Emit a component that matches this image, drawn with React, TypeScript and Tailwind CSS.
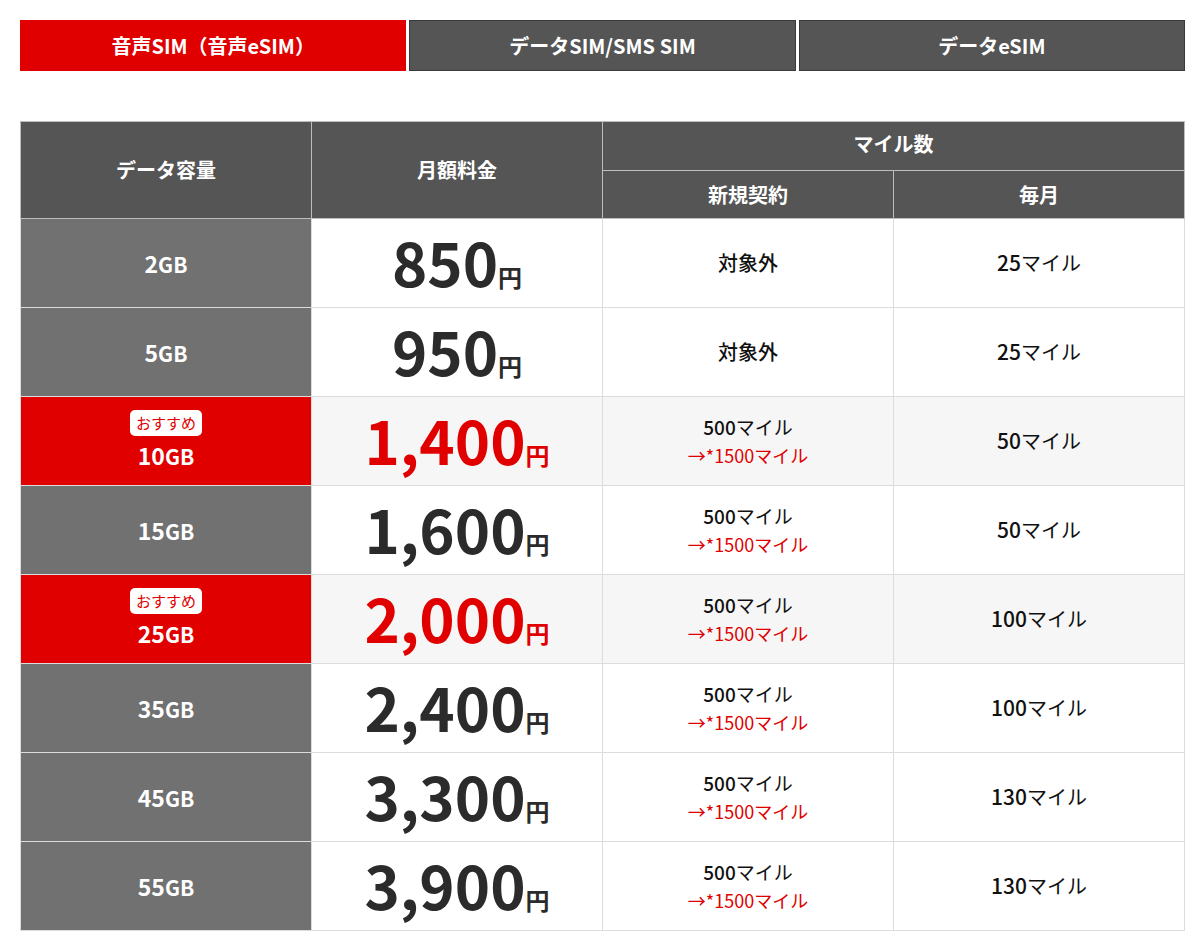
type Plan = {
  gb: string;
  price: string;
  newMile: string | null;
  monthly: string;
  recommend?: boolean;
};

const plans: Plan[] = [
  { gb: "2", price: "850", newMile: null, monthly: "25" },
  { gb: "5", price: "950", newMile: null, monthly: "25" },
  { gb: "10", price: "1,400", newMile: "500", monthly: "50", recommend: true },
  { gb: "15", price: "1,600", newMile: "500", monthly: "50" },
  { gb: "25", price: "2,000", newMile: "500", monthly: "100", recommend: true },
  { gb: "35", price: "2,400", newMile: "500", monthly: "100" },
  { gb: "45", price: "3,300", newMile: "500", monthly: "130" },
  { gb: "55", price: "3,900", newMile: "500", monthly: "130" },
];

const tabs = ["音声SIM（音声eSIM）", "データSIM/SMS SIM", "データeSIM"];

const Row = ({ plan }: { plan: Plan }) => {
  const bg = plan.recommend ? "bg-[#f6f6f6]" : "bg-white";
  return (
    <tr className="h-[89px]">
      <td
        className={`border border-[#dcdcdc] text-center text-white font-bold ${
          plan.recommend ? "bg-[#e00000]" : "bg-[#717171]"
        }`}
      >
        {plan.recommend && (
          <div className="mx-auto mb-[2px] w-fit rounded-[5px] bg-white px-[6px] py-[1px] text-[15px] font-normal leading-[24px] text-[#e00000]">
            おすすめ
          </div>
        )}
        <span className="text-[23px]">{plan.gb}</span>
        <span className="text-[21px]">GB</span>
      </td>
      <td className={`border border-[#dcdcdc] text-center ${bg}`}>
        <span
          className={`text-[60px] font-bold leading-none ${
            plan.recommend ? "text-[#e00000]" : "text-[#2b2b2b]"
          }`}
        >
          {plan.price}
        </span>
        <span
          className={`text-[24px] font-bold ${
            plan.recommend ? "text-[#e00000]" : "text-[#2b2b2b]"
          }`}
        >
          円
        </span>
      </td>
      <td className={`border border-[#dcdcdc] text-center text-[#111] ${bg}`}>
        {plan.newMile ? (
          <div className="leading-[28px]">
            <div className="text-[19px] font-medium">
              {plan.newMile}
              <span className="font-normal">マイル</span>
            </div>
            <div className="text-[18px] text-[#e00000]">→*1500マイル</div>
          </div>
        ) : (
          <span className="text-[20px] font-medium">対象外</span>
        )}
      </td>
      <td className={`border border-[#dcdcdc] text-center text-[#111] ${bg}`}>
        <span className="text-[21px] font-medium">{plan.monthly}</span>
        <span className="text-[20px]">マイル</span>
      </td>
    </tr>
  );
};

export default function App() {
  return (
    <div className="min-h-screen bg-white px-[20px] pt-[20px] font-['Noto_Sans_CJK_JP',sans-serif]">
      <div className="w-[1165px]">
        {/* tabs */}
        <div className="grid grid-cols-3 gap-[3px]">
          {tabs.map((t, i) => (
            <div
              key={t}
              className={`flex h-[51px] items-center justify-center border text-[20px] font-bold text-white ${
                i === 0
                  ? "border-[#e00000] bg-[#e00000]"
                  : "border-[#3a3a3a] bg-[#555555]"
              }`}
            >
              {t}
            </div>
          ))}
        </div>

        {/* table */}
        <table className="mt-[50px] w-[1164px] table-fixed border-collapse">
          <colgroup>
            <col className="w-[291px]" />
            <col className="w-[291px]" />
            <col className="w-[291px]" />
            <col className="w-[291px]" />
          </colgroup>
          <thead className="text-[20px] font-bold text-white">
            <tr className="h-[49px]">
              <th
                rowSpan={2}
                className="border border-[#bdbdbd] bg-[#555555] font-bold"
              >
                データ容量
              </th>
              <th
                rowSpan={2}
                className="border border-[#bdbdbd] bg-[#555555] font-bold"
              >
                月額料金
              </th>
              <th
                colSpan={2}
                className="border border-[#bdbdbd] bg-[#555555] pb-[4px] font-bold"
              >
                マイル数
              </th>
            </tr>
            <tr className="h-[48px]">
              <th className="border border-[#bdbdbd] bg-[#555555] font-bold">
                新規契約
              </th>
              <th className="border border-[#bdbdbd] bg-[#555555] font-bold">
                毎月
              </th>
            </tr>
          </thead>
          <tbody>
            {plans.map((p) => (
              <Row key={p.gb} plan={p} />
            ))}
          </tbody>
        </table>
      </div>
    </div>
  );
}
